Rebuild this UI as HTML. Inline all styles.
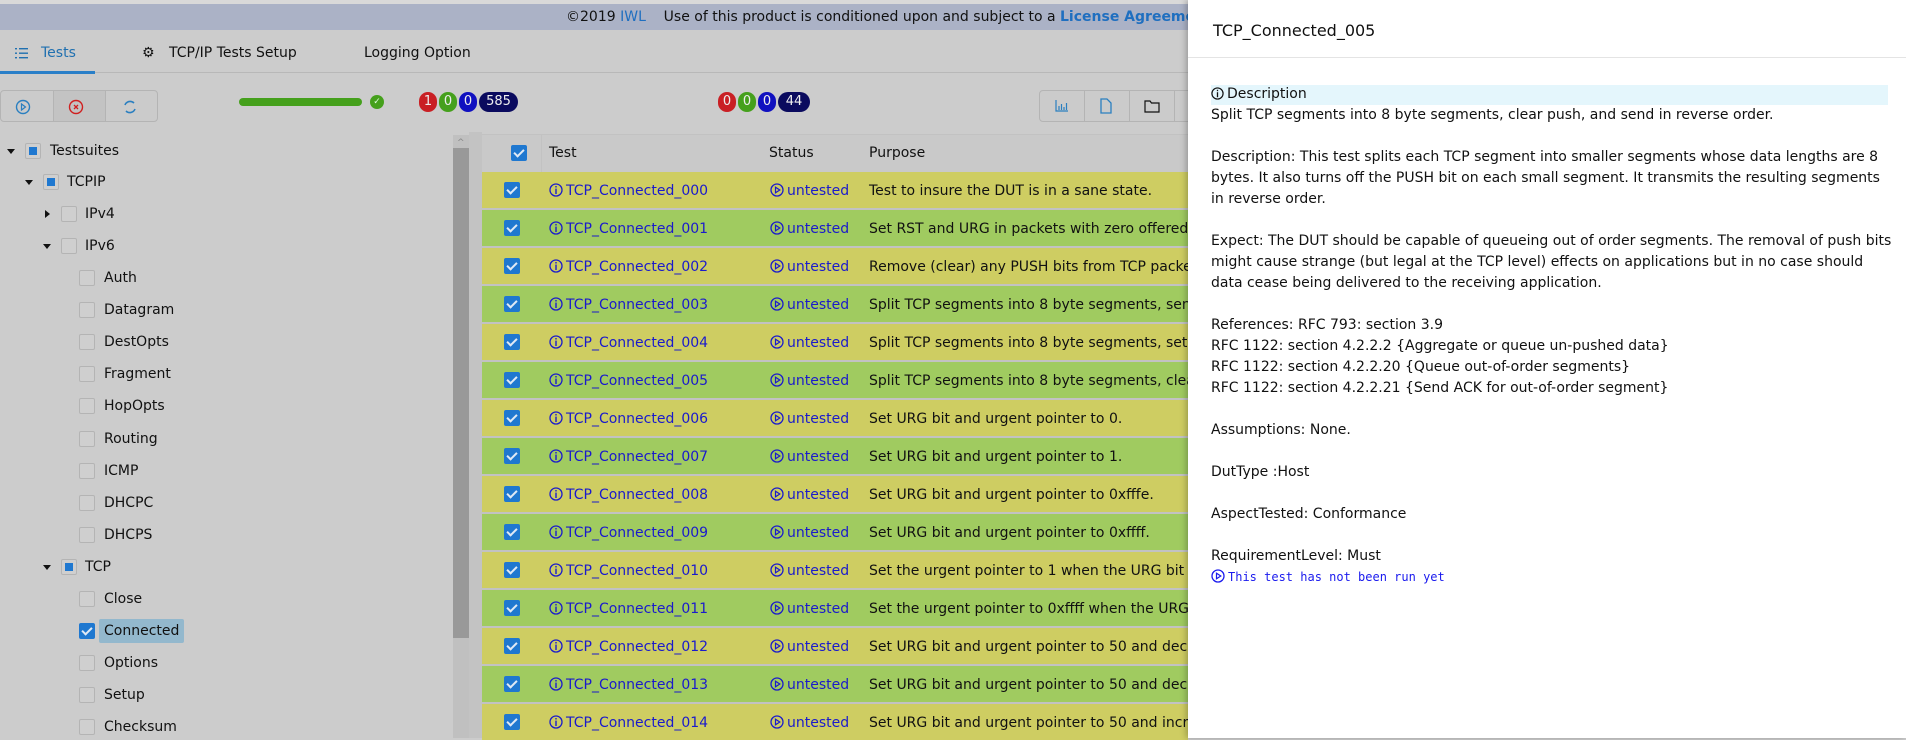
<!DOCTYPE html>
<html><head><meta charset="utf-8"><style>
*{box-sizing:border-box;margin:0;padding:0}
body{width:1906px;height:738px;overflow:hidden;background:#cccccc;font-family:"DejaVu Sans","Liberation Sans",sans-serif;font-size:14px;color:#111;position:relative}
.abs{position:absolute}
.top{left:0;top:0;width:1906px;height:4px;background:#d9d9d9}
.banner{left:0;top:4px;width:1906px;height:26px;background:#abb2c6;font-size:14px;line-height:26px;white-space:nowrap}
.tab{top:43px;line-height:20px;font-size:14px;white-space:nowrap}
.cb{position:absolute;width:16px;height:16px;border:1px solid #b4b4b4;border-radius:2px;background:#cfcfcf}
.cb.part::after{content:"";position:absolute;left:3px;top:3px;width:8px;height:8px;background:#1f78d0}
.cb.on{background:#1f78d0;border-color:#1f78d0}
.cb.on::after{content:"";position:absolute;left:4px;top:1px;width:4px;height:8px;border:solid #dfe9f5;border-width:0 2px 2px 0;transform:rotate(45deg)}
.tree{position:absolute;white-space:nowrap;margin-top:1px}
.arr{position:absolute;width:0;height:0}
.arr.d{border-left:4px solid transparent;border-right:4px solid transparent;border-top:5px solid #111}
.arr.r{border-top:4px solid transparent;border-bottom:4px solid transparent;border-left:5px solid #111}
.row{position:absolute;left:482px;width:706px;height:36px}
.y{background:#cecd62}.g{background:#a0cb60}
.row .t{position:absolute;top:11px;white-space:nowrap}
.blue{color:#1a1acc}
.ic{display:inline-block;vertical-align:-2px;margin-right:3px}
.badge{position:absolute;top:92px;height:20px;border-radius:10px;color:#eee;font-size:13px;line-height:20px;text-align:center}
.drawer{left:1188px;top:0;width:718px;height:738px;background:#fff;box-shadow:-2px 0 6px rgba(0,0,0,.25)}
.dtext{position:absolute;left:23px;top:84px;line-height:21px;font-size:14px;color:#111;white-space:nowrap}
</style></head><body>
<svg width="0" height="0" style="position:absolute">
<defs>
<symbol id="info" viewBox="0 0 14 14"><circle cx="7" cy="7" r="6" fill="none" stroke="currentColor" stroke-width="1.3"/><rect x="6.3" y="3" width="1.4" height="1.5" fill="currentColor"/><rect x="6.3" y="5.6" width="1.4" height="5.4" fill="currentColor"/></symbol>
<symbol id="play" viewBox="0 0 14 14"><circle cx="7" cy="7" r="6" fill="none" stroke="currentColor" stroke-width="1.3"/><path d="M5.5 4.2v5.6L9.8 7z" fill="none" stroke="currentColor" stroke-width="1.2"/></symbol>
</defs></svg>
<div class="abs top"></div>
<div class="abs banner"><span style="position:absolute;left:566px">©2019 <span style="color:#1f6fc0">IWL</span>&nbsp;&nbsp;&nbsp;&nbsp;Use of this product is conditioned upon and subject to a <b style="color:#1f6fc0">License Agreement</b></span></div>

<!-- tabs -->
<svg class="abs" style="left:15px;top:48px" width="13" height="11"><g fill="#2070b0"><rect x="0" y="0" width="2" height="1.4"/><rect x="4" y="0" width="9" height="1.4"/><rect x="0" y="4.5" width="2" height="1.4"/><rect x="4" y="4.5" width="9" height="1.4"/><rect x="0" y="9" width="2" height="1.4"/><rect x="4" y="9" width="9" height="1.4"/></g></svg>
<div class="abs tab" style="left:41px;color:#2070b0">Tests</div>
<div class="abs tab" style="left:142px">⚙</div>
<div class="abs tab" style="left:169px">TCP/IP Tests Setup</div>
<div class="abs tab" style="left:364px">Logging Option</div>
<div class="abs" style="left:0;top:72px;width:1906px;height:1px;background:#b8b8b8"></div>
<div class="abs" style="left:0;top:71px;width:95px;height:3px;background:#2a7fc8"></div>

<!-- toolbar -->
<div class="abs" style="left:0;top:90px;width:158px;height:32px;border:1px solid #b4b4b4;border-radius:4px;background:#cbcbcb;overflow:hidden">
 <div class="abs" style="left:52px;top:0;width:53px;height:32px;background:#c3c3c3;border-left:1px solid #b4b4b4;border-right:1px solid #b4b4b4"></div>
 <svg class="abs" style="left:14px;top:8px" width="16" height="16"><circle cx="8" cy="8" r="6.5" fill="none" stroke="#2a7fc0" stroke-width="1.4"/><path d="M6.5 5v6l4-3z" fill="none" stroke="#2a7fc0" stroke-width="1.2"/></svg>
 <svg class="abs" style="left:67px;top:8px" width="16" height="16"><circle cx="8" cy="8" r="6.5" fill="none" stroke="#d02020" stroke-width="1.4"/><path d="M6 6l4 4M10 6l-4 4" stroke="#d02020" stroke-width="1.3"/></svg>
 <svg class="abs" style="left:121px;top:8px" width="16" height="16"><path d="M3 6a5.5 5.5 0 0 1 9-2M13 10a5.5 5.5 0 0 1-9 2" fill="none" stroke="#2a7fc0" stroke-width="1.6"/></svg>
</div>
<div class="abs" style="left:239px;top:98px;width:123px;height:8px;border-radius:4px;background:#45a01c"></div>
<div class="abs" style="left:370px;top:95px;width:14px;height:14px;border-radius:50%;background:#45a01c;color:#dfd;font-size:9px;line-height:14px;text-align:center">✓</div>
<div class="badge" style="left:419px;width:18px;background:#c91f24">1</div>
<div class="badge" style="left:439px;width:18px;background:#45a01c">0</div>
<div class="badge" style="left:459px;width:18px;background:#1010c0">0</div>
<div class="badge" style="left:479px;width:39px;background:#0a0a5e">585</div>
<div class="badge" style="left:718px;width:18px;background:#c91f24">0</div>
<div class="badge" style="left:738px;width:18px;background:#45a01c">0</div>
<div class="badge" style="left:758px;width:18px;background:#1010c0">0</div>
<div class="badge" style="left:778px;width:32px;background:#0a0a5e">44</div>
<div class="abs" style="left:1039px;top:90px;width:170px;height:32px;border:1px solid #b4b4b4;border-radius:4px;background:#cbcbcb">
 <div class="abs" style="left:44px;top:0;width:1px;height:30px;background:#b4b4b4"></div>
 <div class="abs" style="left:89px;top:0;width:1px;height:30px;background:#b4b4b4"></div>
 <div class="abs" style="left:134px;top:0;width:1px;height:30px;background:#b4b4b4"></div>
 <svg class="abs" style="left:15px;top:9px" width="14" height="12"><path d="M1 0v11h12M4 10V6M6.5 10V4M9 10V7M11.5 10V3" stroke="#2a7fc0" stroke-width="1.2" fill="none"/></svg>
 <svg class="abs" style="left:60px;top:7px" width="12" height="16"><path d="M1 1h6l4 4v10H1z" fill="none" stroke="#2a7fc0" stroke-width="1.3"/></svg>
 <svg class="abs" style="left:104px;top:9px" width="16" height="13"><path d="M1 1h5l1.5 2H15v9H1z" fill="none" stroke="#111" stroke-width="1.2"/></svg>
</div>

<!-- tree -->
<div class="abs" style="left:453px;top:135px;width:16px;height:603px;background:#c0c0c0"></div>
<div class="abs" style="left:453px;top:148px;width:16px;height:490px;background:#999"></div>
<div class="abs" style="left:457px;top:138px;font-size:9px;color:#888">^</div>
<div class="abs" style="left:469px;top:132px;width:13px;height:606px;background:#c3c3c3"></div>

<div class="arr d" style="left:7px;top:149px"></div><div class="cb part" style="left:25px;top:143px"></div><div class="tree" style="left:50px;top:142px">Testsuites</div>
<div class="arr d" style="left:25px;top:180px"></div><div class="cb part" style="left:43px;top:174px"></div><div class="tree" style="left:67px;top:173px">TCPIP</div>
<div class="arr r" style="left:45px;top:210px"></div><div class="cb" style="left:61px;top:206px"></div><div class="tree" style="left:85px;top:205px">IPv4</div>
<div class="arr d" style="left:43px;top:244px"></div><div class="cb" style="left:61px;top:238px"></div><div class="tree" style="left:85px;top:237px">IPv6</div>
<div class="cb" style="left:79px;top:270px"></div><div class="tree" style="left:104px;top:269px">Auth</div>
<div class="cb" style="left:79px;top:302px"></div><div class="tree" style="left:104px;top:301px">Datagram</div>
<div class="cb" style="left:79px;top:334px"></div><div class="tree" style="left:104px;top:333px">DestOpts</div>
<div class="cb" style="left:79px;top:366px"></div><div class="tree" style="left:104px;top:365px">Fragment</div>
<div class="cb" style="left:79px;top:398px"></div><div class="tree" style="left:104px;top:397px">HopOpts</div>
<div class="cb" style="left:79px;top:431px"></div><div class="tree" style="left:104px;top:430px">Routing</div>
<div class="cb" style="left:79px;top:463px"></div><div class="tree" style="left:104px;top:462px">ICMP</div>
<div class="cb" style="left:79px;top:495px"></div><div class="tree" style="left:104px;top:494px">DHCPC</div>
<div class="cb" style="left:79px;top:527px"></div><div class="tree" style="left:104px;top:526px">DHCPS</div>
<div class="arr d" style="left:43px;top:565px"></div><div class="cb part" style="left:61px;top:559px"></div><div class="tree" style="left:85px;top:558px">TCP</div>
<div class="cb" style="left:79px;top:591px"></div><div class="tree" style="left:104px;top:590px">Close</div>
<div class="abs" style="left:99px;top:619px;width:85px;height:24px;background:#93b8cd;border-radius:2px"></div>
<div class="cb on" style="left:79px;top:623px"></div><div class="tree" style="left:104px;top:622px">Connected</div>
<div class="cb" style="left:79px;top:655px"></div><div class="tree" style="left:104px;top:654px">Options</div>
<div class="cb" style="left:79px;top:687px"></div><div class="tree" style="left:104px;top:686px">Setup</div>
<div class="cb" style="left:79px;top:719px"></div><div class="tree" style="left:104px;top:718px">Checksum</div>

<!-- table -->
<div class="abs" style="left:482px;top:134px;width:706px;height:604px;background:#c2c2c2"></div>
<div class="abs" style="left:482px;top:135px;width:706px;height:37px;background:#c9c9c9"></div>
<div class="abs" style="left:541px;top:135px;width:1px;height:37px;background:#c2c2c2"></div>
<div class="cb on" style="left:511px;top:145px"></div>
<div class="abs" style="left:549px;top:145px">Test</div>
<div class="abs" style="left:769px;top:145px">Status</div>
<div class="abs" style="left:869px;top:145px">Purpose</div>

<div class="row y" style="top:172px"><div class="cb on" style="left:22px;top:10px"></div><div class="t blue" style="left:67px"><svg class="ic" width="14" height="14"><use href="#info"/></svg>TCP_Connected_000</div><div class="t blue" style="left:288px"><svg class="ic" width="14" height="14"><use href="#play"/></svg>untested</div><div class="t" style="left:387px">Test to insure the DUT is in a sane state.</div></div>
<div class="row g" style="top:210px"><div class="cb on" style="left:22px;top:10px"></div><div class="t blue" style="left:67px"><svg class="ic" width="14" height="14"><use href="#info"/></svg>TCP_Connected_001</div><div class="t blue" style="left:288px"><svg class="ic" width="14" height="14"><use href="#play"/></svg>untested</div><div class="t" style="left:387px">Set RST and URG in packets with zero offered window</div></div>
<div class="row y" style="top:248px"><div class="cb on" style="left:22px;top:10px"></div><div class="t blue" style="left:67px"><svg class="ic" width="14" height="14"><use href="#info"/></svg>TCP_Connected_002</div><div class="t blue" style="left:288px"><svg class="ic" width="14" height="14"><use href="#play"/></svg>untested</div><div class="t" style="left:387px">Remove (clear) any PUSH bits from TCP packets</div></div>
<div class="row g" style="top:286px"><div class="cb on" style="left:22px;top:10px"></div><div class="t blue" style="left:67px"><svg class="ic" width="14" height="14"><use href="#info"/></svg>TCP_Connected_003</div><div class="t blue" style="left:288px"><svg class="ic" width="14" height="14"><use href="#play"/></svg>untested</div><div class="t" style="left:387px">Split TCP segments into 8 byte segments, send</div></div>
<div class="row y" style="top:324px"><div class="cb on" style="left:22px;top:10px"></div><div class="t blue" style="left:67px"><svg class="ic" width="14" height="14"><use href="#info"/></svg>TCP_Connected_004</div><div class="t blue" style="left:288px"><svg class="ic" width="14" height="14"><use href="#play"/></svg>untested</div><div class="t" style="left:387px">Split TCP segments into 8 byte segments, set</div></div>
<div class="row g" style="top:362px"><div class="cb on" style="left:22px;top:10px"></div><div class="t blue" style="left:67px"><svg class="ic" width="14" height="14"><use href="#info"/></svg>TCP_Connected_005</div><div class="t blue" style="left:288px"><svg class="ic" width="14" height="14"><use href="#play"/></svg>untested</div><div class="t" style="left:387px">Split TCP segments into 8 byte segments, clear</div></div>
<div class="row y" style="top:400px"><div class="cb on" style="left:22px;top:10px"></div><div class="t blue" style="left:67px"><svg class="ic" width="14" height="14"><use href="#info"/></svg>TCP_Connected_006</div><div class="t blue" style="left:288px"><svg class="ic" width="14" height="14"><use href="#play"/></svg>untested</div><div class="t" style="left:387px">Set URG bit and urgent pointer to 0.</div></div>
<div class="row g" style="top:438px"><div class="cb on" style="left:22px;top:10px"></div><div class="t blue" style="left:67px"><svg class="ic" width="14" height="14"><use href="#info"/></svg>TCP_Connected_007</div><div class="t blue" style="left:288px"><svg class="ic" width="14" height="14"><use href="#play"/></svg>untested</div><div class="t" style="left:387px">Set URG bit and urgent pointer to 1.</div></div>
<div class="row y" style="top:476px"><div class="cb on" style="left:22px;top:10px"></div><div class="t blue" style="left:67px"><svg class="ic" width="14" height="14"><use href="#info"/></svg>TCP_Connected_008</div><div class="t blue" style="left:288px"><svg class="ic" width="14" height="14"><use href="#play"/></svg>untested</div><div class="t" style="left:387px">Set URG bit and urgent pointer to 0xfffe.</div></div>
<div class="row g" style="top:514px"><div class="cb on" style="left:22px;top:10px"></div><div class="t blue" style="left:67px"><svg class="ic" width="14" height="14"><use href="#info"/></svg>TCP_Connected_009</div><div class="t blue" style="left:288px"><svg class="ic" width="14" height="14"><use href="#play"/></svg>untested</div><div class="t" style="left:387px">Set URG bit and urgent pointer to 0xffff.</div></div>
<div class="row y" style="top:552px"><div class="cb on" style="left:22px;top:10px"></div><div class="t blue" style="left:67px"><svg class="ic" width="14" height="14"><use href="#info"/></svg>TCP_Connected_010</div><div class="t blue" style="left:288px"><svg class="ic" width="14" height="14"><use href="#play"/></svg>untested</div><div class="t" style="left:387px">Set the urgent pointer to 1 when the URG bit</div></div>
<div class="row g" style="top:590px"><div class="cb on" style="left:22px;top:10px"></div><div class="t blue" style="left:67px"><svg class="ic" width="14" height="14"><use href="#info"/></svg>TCP_Connected_011</div><div class="t blue" style="left:288px"><svg class="ic" width="14" height="14"><use href="#play"/></svg>untested</div><div class="t" style="left:387px">Set the urgent pointer to 0xffff when the URG</div></div>
<div class="row y" style="top:628px"><div class="cb on" style="left:22px;top:10px"></div><div class="t blue" style="left:67px"><svg class="ic" width="14" height="14"><use href="#info"/></svg>TCP_Connected_012</div><div class="t blue" style="left:288px"><svg class="ic" width="14" height="14"><use href="#play"/></svg>untested</div><div class="t" style="left:387px">Set URG bit and urgent pointer to 50 and dec</div></div>
<div class="row g" style="top:666px"><div class="cb on" style="left:22px;top:10px"></div><div class="t blue" style="left:67px"><svg class="ic" width="14" height="14"><use href="#info"/></svg>TCP_Connected_013</div><div class="t blue" style="left:288px"><svg class="ic" width="14" height="14"><use href="#play"/></svg>untested</div><div class="t" style="left:387px">Set URG bit and urgent pointer to 50 and dec</div></div>
<div class="row y" style="top:704px"><div class="cb on" style="left:22px;top:10px"></div><div class="t blue" style="left:67px"><svg class="ic" width="14" height="14"><use href="#info"/></svg>TCP_Connected_014</div><div class="t blue" style="left:288px"><svg class="ic" width="14" height="14"><use href="#play"/></svg>untested</div><div class="t" style="left:387px">Set URG bit and urgent pointer to 50 and incr</div></div>

<!-- drawer -->
<div class="abs drawer">
 <div class="abs" style="left:25px;top:21px;font-size:16px;line-height:20px">TCP_Connected_005</div>
 <div class="abs" style="left:0;top:57px;width:718px;height:1px;background:#e4e4e4"></div>
 <div class="abs" style="left:23px;top:85px;width:677px;height:20px;background:#e4f6fc"></div>
 <div class="dtext"><svg class="ic" width="13" height="13" style="color:#111"><use href="#info"/></svg>Description<br>Split TCP segments into 8 byte segments, clear push, and send in reverse order.<br><br>Description: This test splits each TCP segment into smaller segments whose data lengths are 8<br>bytes. It also turns off the PUSH bit on each small segment. It transmits the resulting segments<br>in reverse order.<br><br>Expect: The DUT should be capable of queueing out of order segments. The removal of push bits<br>might cause strange (but legal at the TCP level) effects on applications but in no case should<br>data cease being delivered to the receiving application.<br><br>References: RFC 793: section 3.9<br>RFC 1122: section 4.2.2.2 {Aggregate or queue un-pushed data}<br>RFC 1122: section 4.2.2.20 {Queue out-of-order segments}<br>RFC 1122: section 4.2.2.21 {Send ACK for out-of-order segment}<br><br>Assumptions: None.<br><br>DutType :Host<br><br>AspectTested: Conformance<br><br>RequirementLevel: Must<br><span style="font-family:'DejaVu Sans Mono','Liberation Mono',monospace;font-size:12px;color:#1a1aee"><svg class="ic" width="14" height="14"><use href="#play"/></svg>This test has not been run yet</span></div>
</div>
</body></html>
